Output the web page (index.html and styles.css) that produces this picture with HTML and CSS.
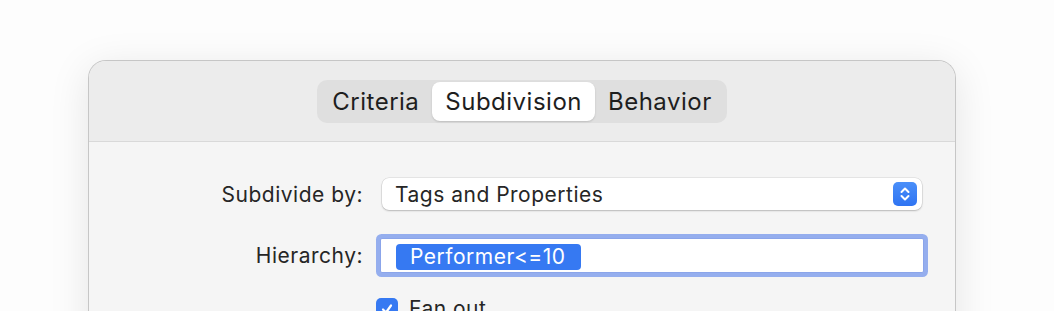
FILE: index.html
```html
<!DOCTYPE html>
<html lang="en">
<head>
    <meta charset="UTF-8">
    <meta name="viewport" content="width=device-width, initial-scale=1.0">
    <title>Smart Playlist Options</title>
    <link rel="stylesheet" href="styles.css">
</head>
<body>
    <div class="window">
        <div class="toolbar">
            <div class="segmented">
                <span class="segment">Criteria</span>
                <span class="segment selected">Subdivision</span>
                <span class="segment">Behavior</span>
            </div>
        </div>
        <div class="content">
            <div class="form">
                <label class="row-label">Subdivide by:</label>
                <div class="popup">
                    <span>Tags and Properties</span>
                    <span class="stepper">
                        <svg width="12" height="16" viewBox="0 0 12 16">
                            <path d="M2.5 6 L6 2.5 L9.5 6 M2.5 10 L6 13.5 L9.5 10" fill="none" stroke="#fff" stroke-width="2" stroke-linecap="round" stroke-linejoin="round"/>
                        </svg>
                    </span>
                </div>

                <label class="row-label">Hierarchy:</label>
                <div class="token-field">
                    <span class="token">Performer&lt;=10</span>
                </div>

                <span></span>
                <div class="checkbox-row">
                    <span class="checkbox">
                        <svg width="14" height="14" viewBox="0 0 14 14">
                            <path d="M3 7.5 L6 10.5 L11 3.5" fill="none" stroke="#fff" stroke-width="2.2" stroke-linecap="round" stroke-linejoin="round"/>
                        </svg>
                    </span>
                    <span>Fan out</span>
                </div>
            </div>
        </div>
    </div>
</body>
</html>
```

FILE: styles.css
```css
body {
    margin: 0;
    background-color: #fdfdfd;
    font-family: Inter, "Noto Sans", sans-serif;
    color: #262626;
    overflow: hidden;
}
.window {
    margin: 60px 0 0 88px;
    width: 866px;
    height: 400px;
    border: 1px solid #c6c6c6;
    border-bottom: none;
    border-radius: 18px 18px 0 0;
    background-color: #f5f5f5;
    box-shadow: 0 8px 40px rgba(0,0,0,0.10);
    overflow: hidden;
}
.toolbar {
    height: 81px;
    background-color: #ececec;
    border-bottom: 1px solid #d9d9d9;
    display: flex;
    justify-content: center;
    align-items: flex-start;
    padding-top: 19px;
    box-sizing: border-box;
}
.segmented {
    display: flex;
    align-items: center;
    height: 43px;
    padding: 0 2px;
    box-sizing: border-box;
    background-color: #dfdfdf;
    border-radius: 10px;
}
.segment {
    height: 39px;
    line-height: 39px;
    padding: 0 13px;
    font-size: 24px;
    letter-spacing: 0.5px;
    color: #1e1e1e;
}
.segment.selected {
    background-color: #fff;
    border-radius: 8px;
    box-shadow: 0 1px 2px rgba(0,0,0,0.15);
}
.content {
    padding: 36px 33px 0 0;
}
.form {
    display: grid;
    grid-template-columns: 274px 1fr;
    column-gap: 19px;
    row-gap: 28px;
    align-items: center;
    font-size: 21px;
    letter-spacing: 0.5px;
}
.row-label {
    text-align: right;
    color: #262626;
}
.popup {
    height: 32px;
    background-color: #fff;
    border-radius: 7px;
    box-shadow: 0 0 0 0.5px rgba(0,0,0,0.12), 0 1px 2px rgba(0,0,0,0.2);
    display: flex;
    align-items: center;
    justify-content: space-between;
    padding: 0 5px 0 13px;
}
.stepper {
    width: 24px;
    height: 24px;
    border-radius: 5px;
    background: linear-gradient(#4a8ff9, #2f74f2);
    display: flex;
    align-items: center;
    justify-content: center;
}
.token-field {
    margin: 0 -2px;
    height: 35px;
    box-sizing: border-box;
    background-color: #fff;
    border: 1px solid #8ba5ea;
    box-shadow: 0 0 0 4px #95aeee;
    border-radius: 2px;
    display: flex;
    align-items: center;
    padding: 2px 0 0 15px;
}
.token {
    height: 26px;
    line-height: 26px;
    padding: 0 15px 0 14px;
    background-color: #3679f2;
    color: #fff;
    border-radius: 4px;
}
.checkbox-row {
    display: flex;
    align-items: center;
    gap: 11px;
    margin: -5px 0 0 -6px;
}
.checkbox {
    width: 22px;
    height: 22px;
    border-radius: 5px;
    background-color: #3679f2;
    display: flex;
    align-items: center;
    justify-content: center;
}
```
